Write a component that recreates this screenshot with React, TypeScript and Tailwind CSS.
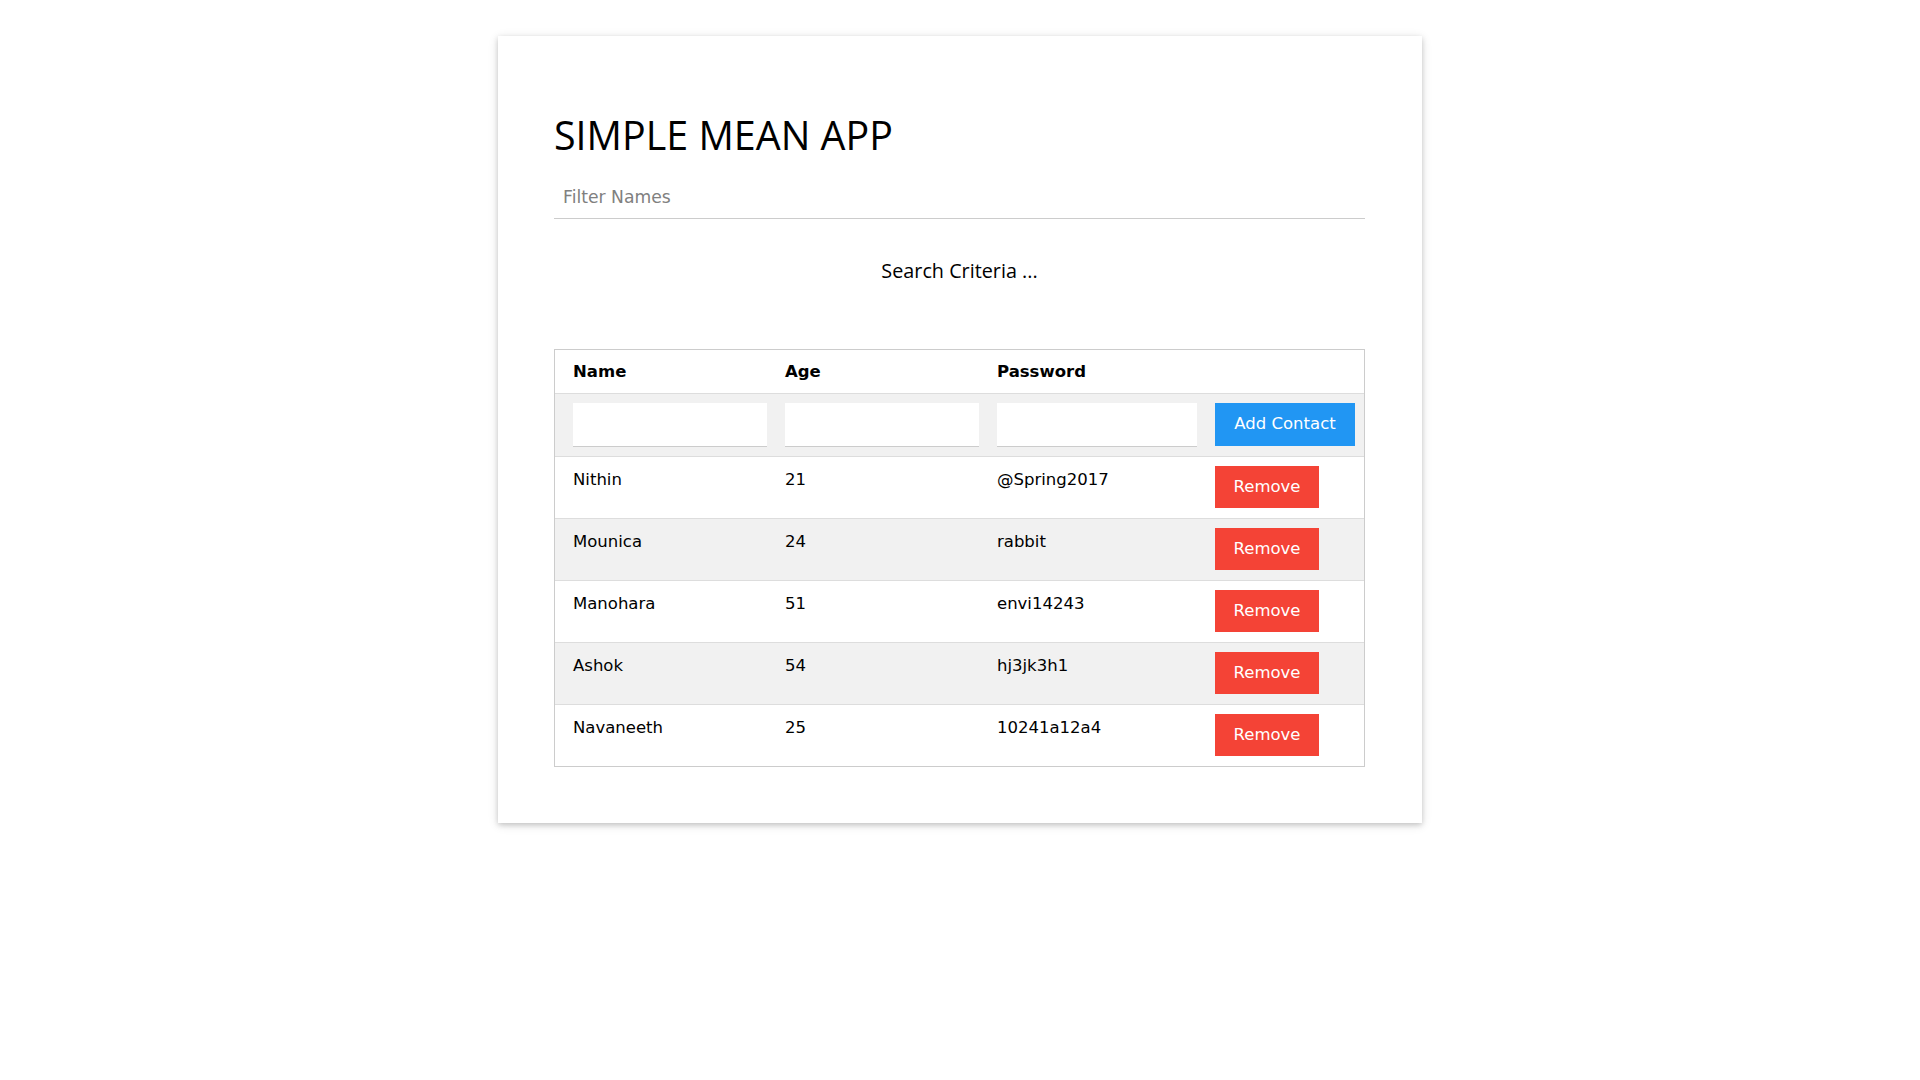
import React from 'react';

interface Contact {
  name: string;
  age: number;
  password: string;
}

const contacts: Contact[] = [
  { name: 'Nithin', age: 21, password: '@Spring2017' },
  { name: 'Mounica', age: 24, password: 'rabbit' },
  { name: 'Manohara', age: 51, password: 'envi14243' },
  { name: 'Ashok', age: 54, password: 'hj3jk3h1' },
  { name: 'Navaneeth', age: 25, password: '10241a12a4' },
];

const rowGrid = 'grid grid-cols-[194px_194px_200px_140px] gap-x-[18px] pl-[18px] pr-[9px]';
const inputCls =
  "h-[44px] w-full border-b border-[#ccc] bg-white px-[9px] font-['DejaVu_Sans',Verdana,sans-serif] text-[16.5px] outline-none";

const App: React.FC = () => {
  return (
    <div className="min-h-screen bg-white pt-[36px] font-['DejaVu_Sans',Verdana,sans-serif] text-[16.5px] leading-[24.75px] text-black">
      <div className="mx-auto w-[924px] bg-white pl-[56px] pr-[57px] pt-[75px] pb-[56px] shadow-[0_2px_5px_0_rgba(0,0,0,0.16),0_2px_10px_0_rgba(0,0,0,0.12)]">
        <h1 className="font-['Open_Sans',sans-serif] text-[39.4px] leading-[48px] font-normal">SIMPLE MEAN APP</h1>

        <input
          type="text"
          placeholder="Filter Names"
          className="mt-[17px] block h-[43px] w-full border-b border-[#ccc] bg-white px-[9px] font-['DejaVu_Sans',Verdana,sans-serif] text-[17.2px] outline-none placeholder:text-[#808080]"
        />

        <h5 className="mt-[37px] text-center font-['Open_Sans',sans-serif] text-[19.8px] leading-[30px] font-normal">
          Search Criteria ...
        </h5>

        <div className="mt-[63px] border border-[#ccc]">
          {/* header */}
          <div className={`${rowGrid} h-[44px] items-center border-b border-[#ddd] bg-white pt-[2px] font-bold`}>
            <div>Name</div>
            <div>Age</div>
            <div>Password</div>
            <div />
          </div>

          {/* add row */}
          <div className={`${rowGrid} h-[63px] items-start border-b border-[#ddd] bg-[#f1f1f1] pt-[9px]`}>
            <input className={inputCls} />
            <input className={inputCls} />
            <input className={inputCls} />
            <button className="h-[43px] w-full bg-[#2196f3] text-white">Add Contact</button>
          </div>

          {contacts.map((c, idx) => (
            <div
              key={c.name}
              className={`${rowGrid} items-start pt-[9px] ${idx % 2 === 1 ? 'bg-[#f1f1f1]' : 'bg-white'} ${
                idx < contacts.length - 1 ? 'h-[62px] border-b border-[#ddd]' : 'h-[61px]'
              }`}
            >
              <div className="pt-[2px]">{c.name}</div>
              <div className="pt-[2px]">{c.age}</div>
              <div className="pt-[2px]">{c.password}</div>
              <div>
                <button className="h-[42px] w-[104px] bg-[#f44336] text-white">Remove</button>
              </div>
            </div>
          ))}
        </div>
      </div>
    </div>
  );
};

export default App;
